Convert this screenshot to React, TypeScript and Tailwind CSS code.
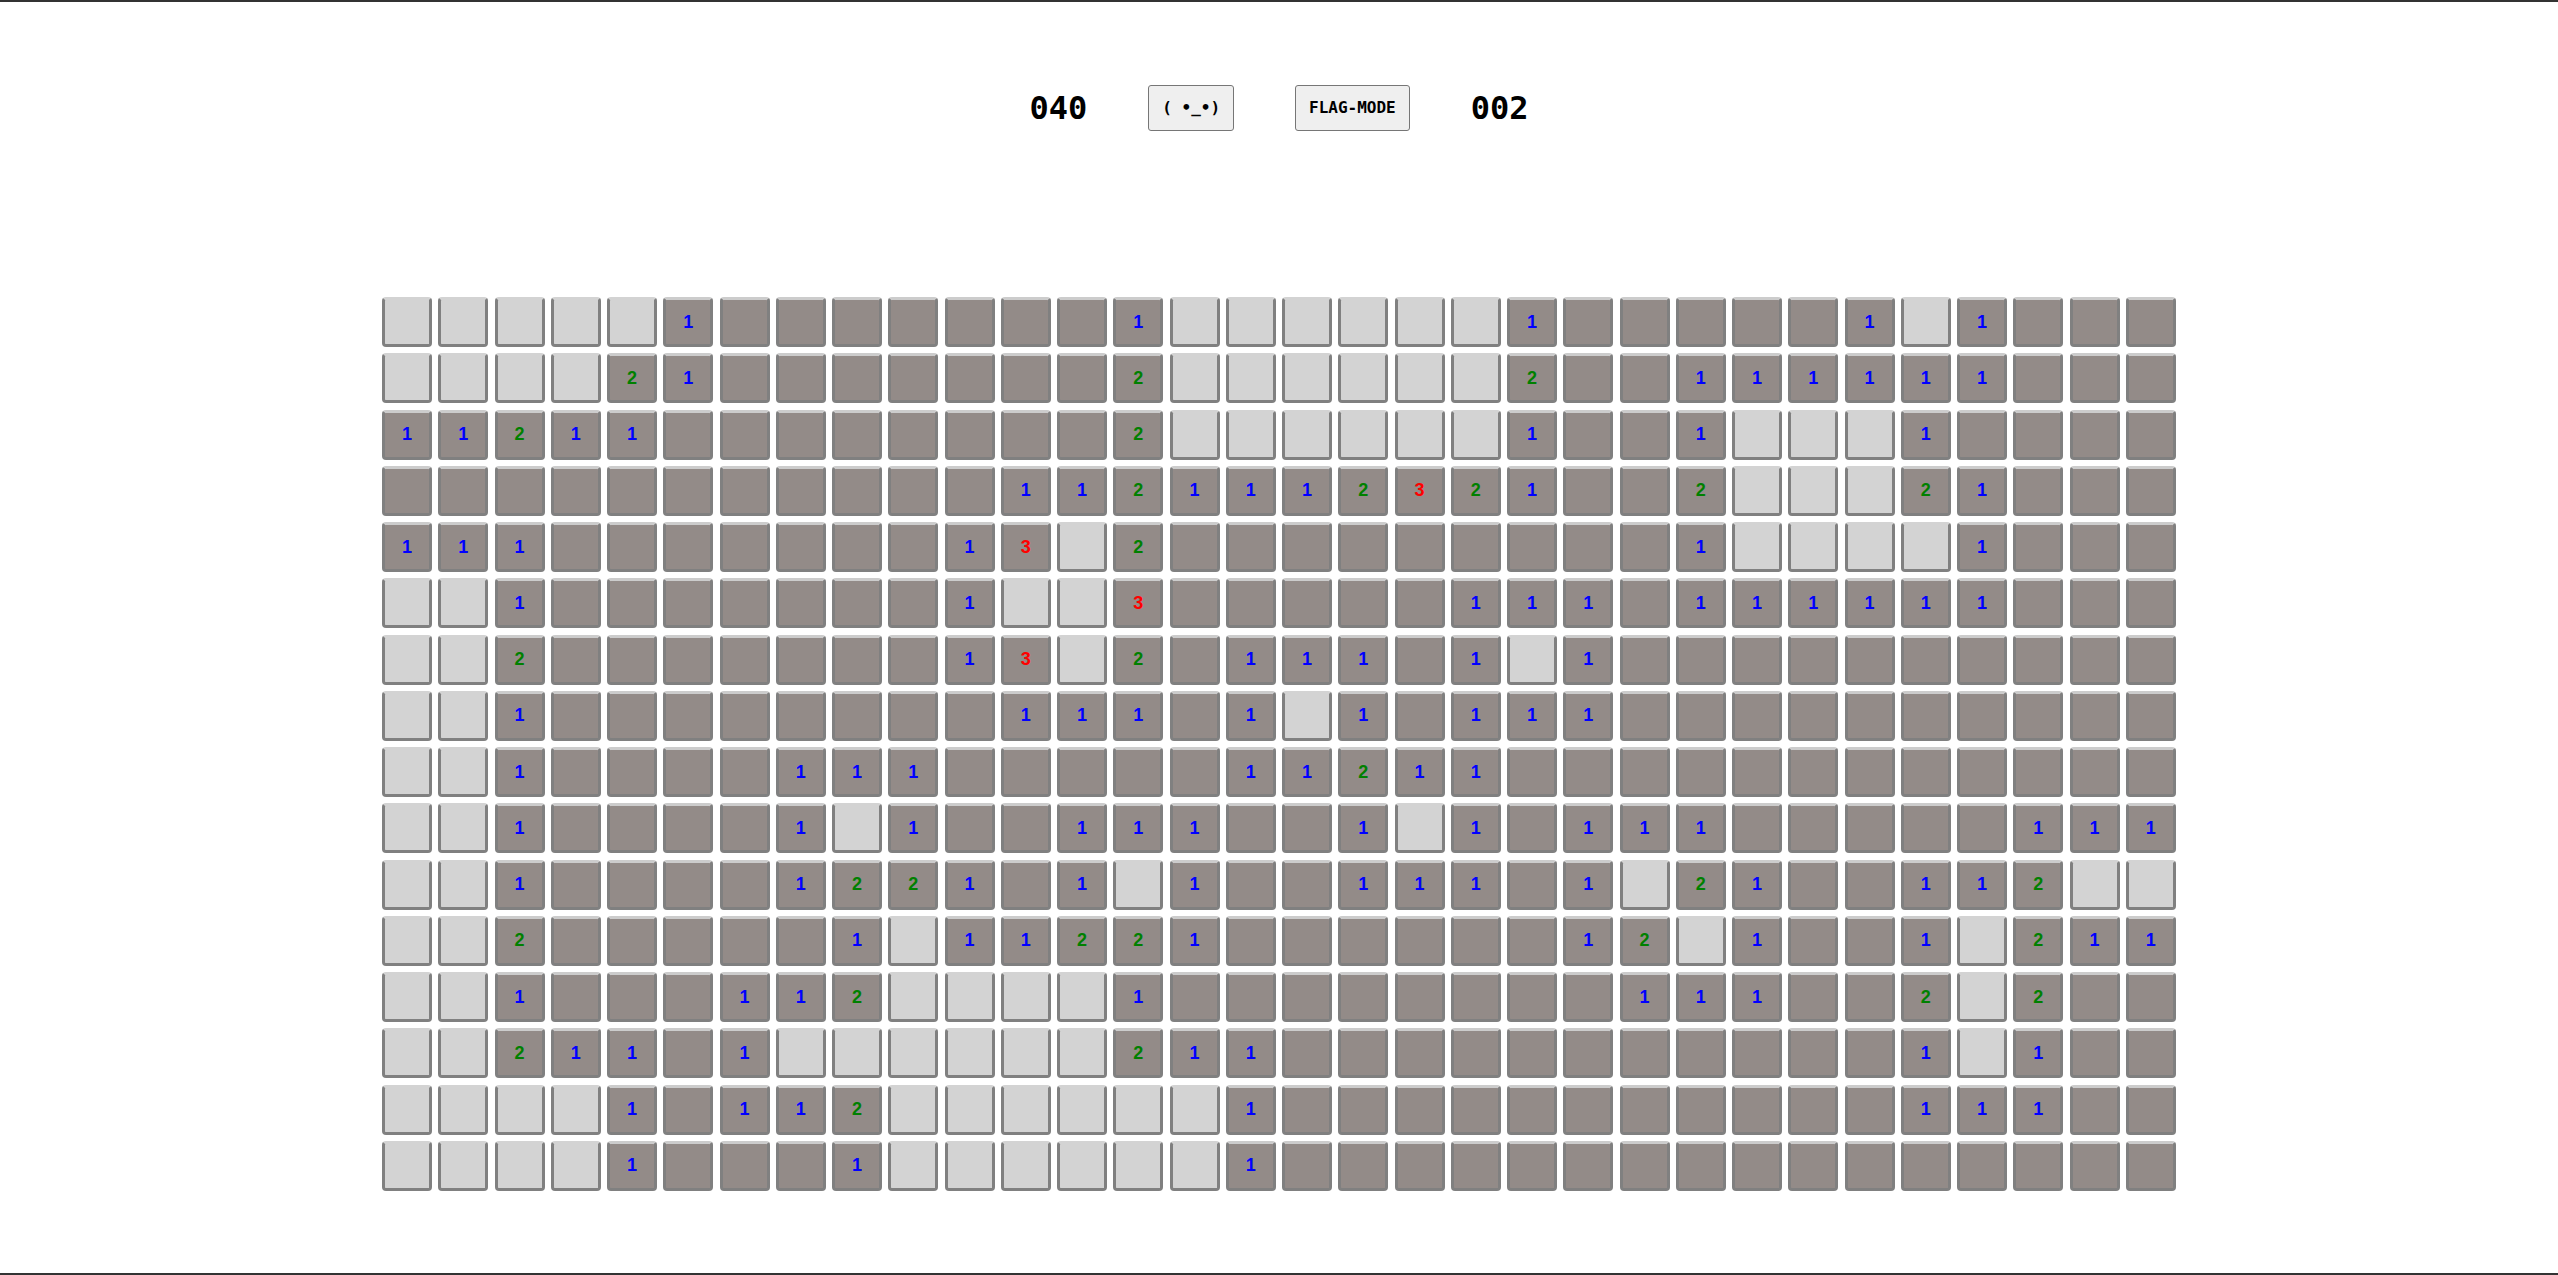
const BOARD = [
  ".....1#######1......1#####1.1###",
  "....21#######2......2##111111###",
  "11211########2......1##1...1####",
  "###########1121112321##2...21###",
  "111#######13.2#########1....1###",
  "..1#######1..3#####111#111111###",
  "..2#######13.2#111#1.1##########",
  "..1########111#1.1#111##########",
  "..1####111#####11211############",
  "..1####1.1##111##1.1#111#####111",
  "..1####1221#1.1##111#1.21##112..",
  "..2#####1.11221######12.1##1.211",
  "..1###112....1########111##2.2##",
  "..211#1......211###########1.1##",
  "....1#112......1###########111##",
  "....1###1......1################",
];

const NUM_COLOR: Record<string, string> = {
  "1": "text-[#0000ff]",
  "2": "text-[#008000]",
  "3": "text-[#ff0000]",
};

function Cell({ ch }: { ch: string }) {
  const light = ch === ".";
  return (
    <div
      className={`flex h-[50px] w-[50px] items-center justify-center rounded-[4px] border-[3px] border-[#808080] border-t-[#cccccc] font-['Liberation_Sans',Arial,sans-serif] text-[18px] font-bold ${
        light ? "bg-[#d3d3d3] border-t-[#d3d3d3]" : "bg-[#938b88]"
      } ${NUM_COLOR[ch] ?? ""}`}
    >
      {NUM_COLOR[ch] ? ch : ""}
    </div>
  );
}

function Counter({ value }: { value: string }) {
  return (
    <div className="font-['DejaVu_Sans_Mono',monospace] text-[32px] font-bold leading-none text-black">
      {value}
    </div>
  );
}

function HeaderButton({ children }: { children: string }) {
  return (
    <button
      type="button"
      className="h-[46px] rounded-[3px] border border-[#767676] bg-[#efefef] px-[13px] font-['DejaVu_Sans_Mono',monospace] text-[16px] font-bold text-black"
    >
      {children}
    </button>
  );
}

export default function App() {
  return (
    <div className="min-h-[1275px] border-y-2 border-[#333333] bg-white">
      <div className="flex items-center justify-center gap-[61px] pt-[83px]">
        <Counter value="040" />
        <HeaderButton>( •_•)</HeaderButton>
        <HeaderButton>FLAG-MODE</HeaderButton>
        <Counter value="002" />
      </div>
      <div className="mt-[166px] flex justify-center">
        <div className="grid grid-cols-[repeat(32,50px)] gap-[6.25px]">
          {BOARD.map((row, r) =>
            row.split("").map((ch, c) => <Cell key={`${r}-${c}`} ch={ch} />)
          )}
        </div>
      </div>
    </div>
  );
}
